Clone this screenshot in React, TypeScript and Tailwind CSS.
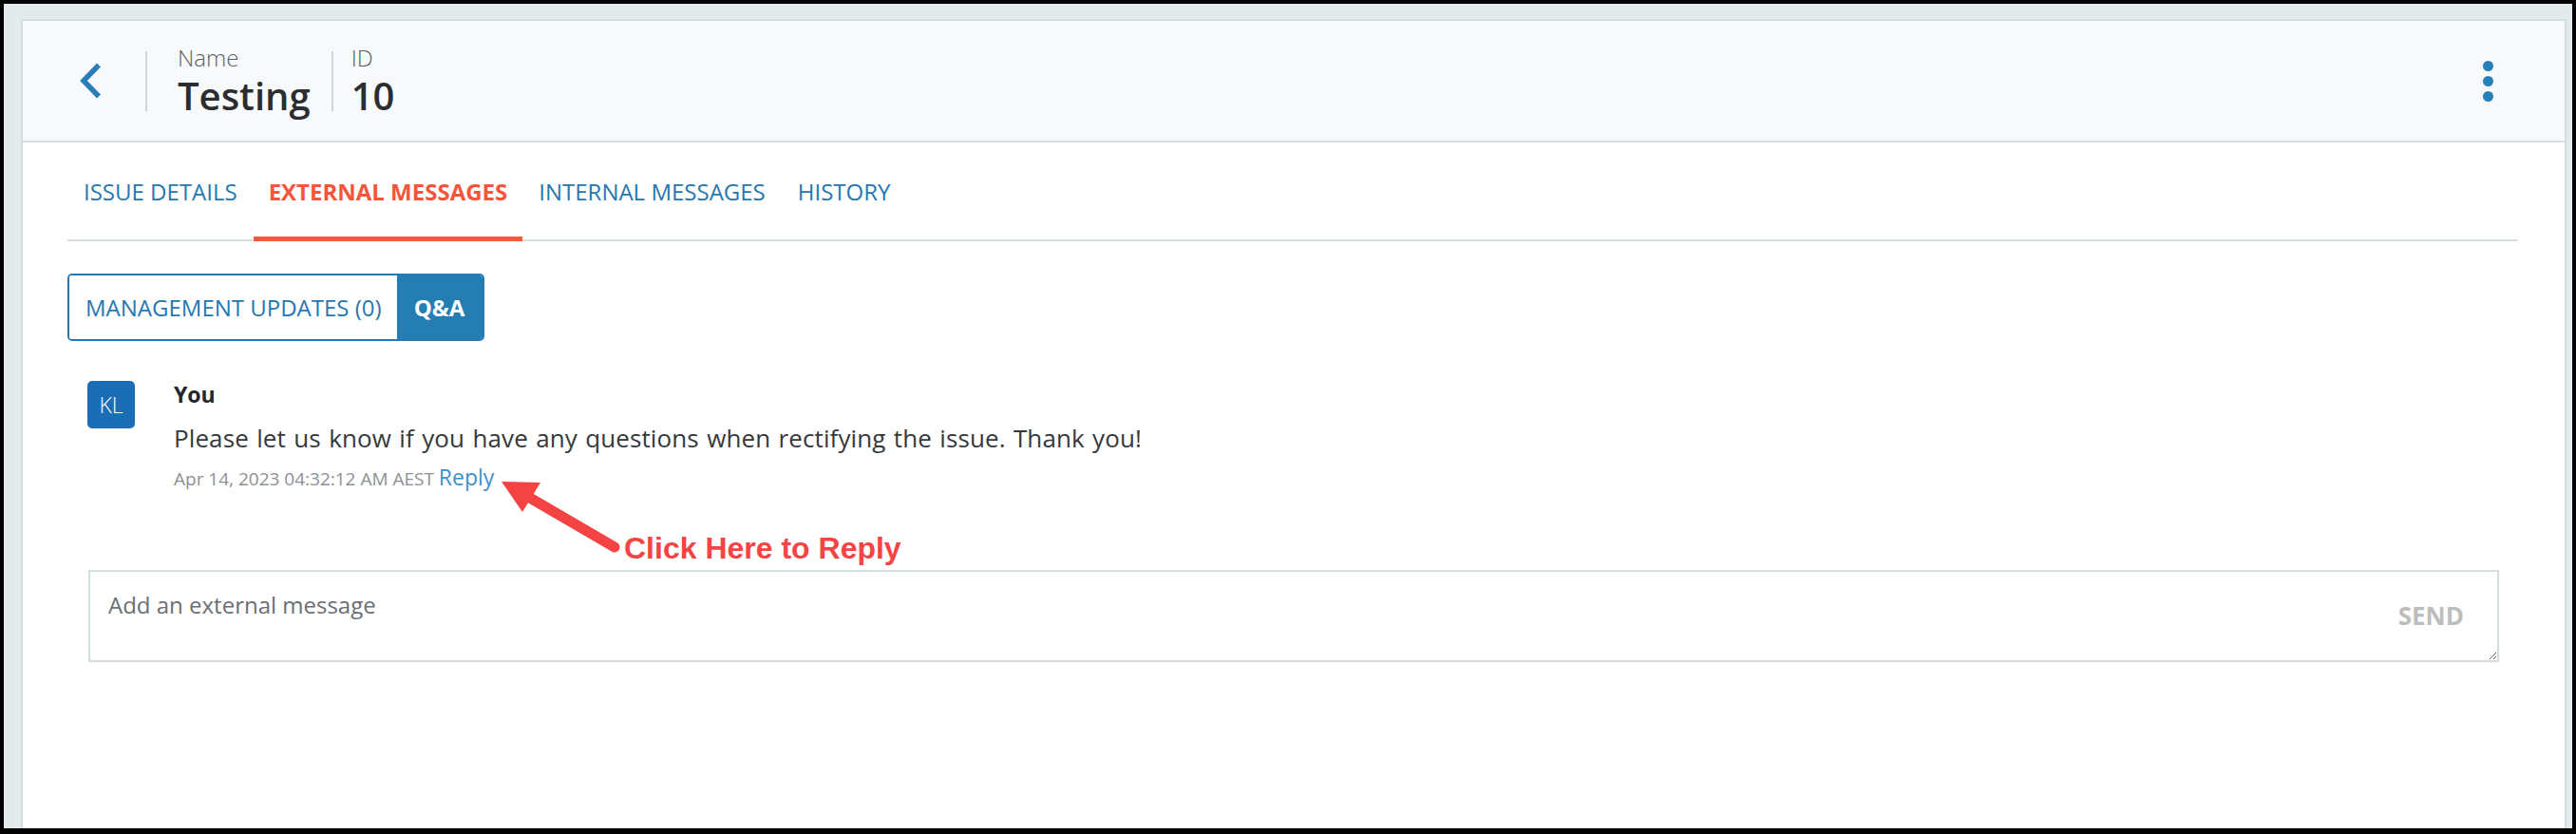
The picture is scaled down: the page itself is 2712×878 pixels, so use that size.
import React from "react";

const tabs = ["ISSUE DETAILS", "EXTERNAL MESSAGES", "INTERNAL MESSAGES", "HISTORY"];

function Header() {
  return (
    <div className="flex h-[128px] items-center border-b-2 border-[#d6dee1] bg-[#f8f9fb] pl-[58px] pr-[75px]">
      {/* back chevron */}
      <svg width="26" height="40" viewBox="0 0 26 40" className="shrink-0">
        <path d="M22 3.5 L6 20 L22 36.5" fill="none" stroke="#2a7db6" strokeWidth="5.5" strokeLinejoin="miter" />
      </svg>
      <div className="ml-[45px] h-[63px] w-[2px] bg-[#cfd5d8]" />
      <div className="ml-[32px] flex flex-col">
        <span className="text-[24px] font-light leading-[28px] text-[#5b5f63]">Name</span>
        <span className="mt-[4px] text-[40px] font-semibold leading-[44px] text-[#2b2d30]">Testing</span>
      </div>
      <div className="ml-[22px] h-[63px] w-[2px] bg-[#cfd5d8]" />
      <div className="ml-[19px] flex flex-col">
        <span className="text-[24px] font-light leading-[28px] text-[#5b5f63]">ID</span>
        <span className="mt-[4px] text-[40px] font-semibold leading-[44px] text-[#2b2d30]">10</span>
      </div>
      {/* kebab menu */}
      <div className="ml-auto flex flex-col gap-[5px]">
        <span className="h-[11px] w-[11px] rounded-full bg-[#2680b9]" />
        <span className="h-[11px] w-[11px] rounded-full bg-[#2680b9]" />
        <span className="h-[11px] w-[11px] rounded-full bg-[#2680b9]" />
      </div>
    </div>
  );
}

function Tabs() {
  return (
    <div className="flex border-b-2 border-[#d9e0e3]">
      {tabs.map((t) =>
        t === "EXTERNAL MESSAGES" ? (
          <div
            key={t}
            className="-mb-[2px] border-b-[5px] border-[#fa5a3c] px-[16px] pb-[31px] text-[24px] font-bold leading-[32px] text-[#f5553b]"
          >
            {t}
          </div>
        ) : (
          <div
            key={t}
            className="-mb-[2px] border-b-[5px] border-transparent px-[17px] pb-[31px] text-[24px] font-normal leading-[32px] text-[#2677b0]"
          >
            {t}
          </div>
        )
      )}
    </div>
  );
}

function Message() {
  return (
    <div className="ml-[21px] mt-[42px] flex items-start">
      <div className="flex h-[50px] w-[50px] shrink-0 items-center justify-center rounded-[5px] bg-[#1b6db6] text-[23px] font-light text-white">
        KL
      </div>
      <div className="-mt-px ml-[41px] flex flex-col">
        <span className="text-[23px] font-bold leading-[30px] text-[#23262a]">You</span>
        <p className="mt-[13px] text-[26px] font-normal leading-[36px] tracking-[0.1px] [word-spacing:1.5px] text-[#36393c]">
          Please let us know if you have any questions when rectifying the issue. Thank you!
        </p>
        <div className="mt-[9px] text-[19px] font-normal leading-[28px] text-[#8d9094]">
          Apr 14, 2023 04:32:12 AM AEST{" "}
          <a className="cursor-pointer text-[23px] font-normal leading-[28px] text-[#3f90c8]">Reply</a>
        </div>
      </div>
    </div>
  );
}

export default function App() {
  return (
    <div className="relative h-[878px] w-[2712px] bg-black px-[4px] pb-[6px] pt-[4px] font-['Open_Sans',sans-serif]">
      <div className="flex h-full flex-col bg-[#e4e9ec] pl-[18px] pr-[6px] pt-[16px]">
        <div className="flex flex-1 flex-col border-2 border-b-0 border-[#d3dcdf] bg-white">
          <Header />
          <div className="pl-[47px] pr-[49px] pt-[36px]">
            <Tabs />

            {/* management / Q&A toggle */}
            <div className="mt-[34px] flex h-[71px] w-fit overflow-hidden rounded-[5px] border-2 border-[#2679b1]">
              <div className="flex items-center bg-white pl-[17px] pr-[16px] text-[24px] font-normal text-[#2677b0]">
                MANAGEMENT UPDATES (0)
              </div>
              <div className="flex w-[90px] items-center justify-center bg-[#247db3] text-[24px] font-bold text-white">
                Q&amp;A
              </div>
            </div>

            <Message />

            <div className="relative ml-[22px] mr-[20px] mt-[82px]">
              <textarea
                placeholder="Add an external message"
                className="block h-[97px] w-full border-2 border-[#d4dde0] pl-[19px] pr-[140px] pt-[19px] text-[24px] leading-[32px] text-[#333] outline-none placeholder:text-[#6a6f75]"
              />
              <div className="absolute inset-y-0 right-[37px] flex items-center text-[26px] font-bold text-[#bdbdbd]">
                SEND
              </div>
            </div>
          </div>
        </div>
      </div>

      {/* annotation overlay */}
      <svg className="pointer-events-none absolute left-0 top-0" width="2712" height="878">
        <line x1="647" y1="576" x2="556" y2="523" stroke="#f44343" strokeWidth="11" strokeLinecap="round" />
        <polygon points="528,507 569,508 550,539" fill="#f44343" />
      </svg>
      <div className="pointer-events-none absolute left-[657px] top-[561px] font-['Liberation_Sans',Arial,sans-serif] text-[32px] font-bold leading-[32px] text-[#f44444]">
        Click Here to Reply
      </div>
    </div>
  );
}
